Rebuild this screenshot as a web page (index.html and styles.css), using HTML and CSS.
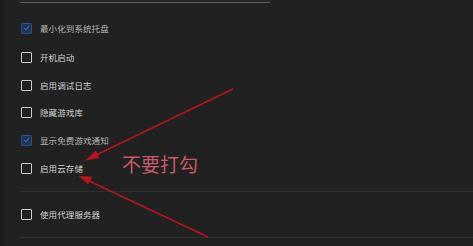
FILE: index.html
```html
<!DOCTYPE html>
<html lang="zh">
<head>
<meta charset="utf-8">
<link rel="stylesheet" href="styles.css">
</head>
<body>
<div class="page">
  <div class="input"></div>
  <div class="list">
    <div class="row checked"><span class="box"><svg viewBox="0 0 10 10" width="10" height="10"><path d="M2.5 5.2 L4.3 7 L7.6 3" fill="none" stroke="#5d7fb0" stroke-width="1"/></svg></span><span class="label">最小化到系统托盘</span></div>
    <div class="row r2"><span class="box"></span><span class="label">开机启动</span></div>
    <div class="row r3"><span class="box"></span><span class="label">启用调试日志</span></div>
    <div class="row"><span class="box"></span><span class="label">隐藏游戏库</span></div>
    <div class="row checked"><span class="box"><svg viewBox="0 0 10 10" width="10" height="10"><path d="M2.5 5.2 L4.3 7 L7.6 3" fill="none" stroke="#5d7fb0" stroke-width="1"/></svg></span><span class="label">显示免费游戏通知</span></div>
    <div class="row"><span class="box"></span><span class="label">启用云存储</span></div>
  </div>
  <div class="section">
    <div class="row proxy"><span class="box"></span><span class="label">使用代理服务器</span></div>
  </div>
  <div class="note">不要打勾</div>
  <svg class="arrows" width="473" height="246" viewBox="0 0 473 246">
    <g stroke="#b3161f" stroke-width="1.6" fill="#c0121c">
      <line x1="233" y1="89" x2="94" y2="156"/>
      <path d="M86 160 L96 151 L99 158 Z" stroke-width="0.5"/>
      <line x1="208" y1="237" x2="87" y2="180"/>
      <path d="M79 176 L92 177 L88 184 Z" stroke-width="0.5"/>
    </g>
  </svg>
</div>
</body>
</html>
```
FILE: styles.css
```css
html, body {
  margin: 0;
  padding: 0;
  background: #212121;
}
.page {
  position: relative;
  width: 473px;
  height: 246px;
  overflow: hidden;
  background: #212121;
  border-left: 4px solid #1c1c1c;
  box-sizing: border-box;
  font-family: "Noto Sans CJK SC", "Noto Sans", sans-serif;
}
.input {
  margin-left: 16px;
  width: 250px;
  height: 2px;
  background: #262626;
  border-bottom: 1px solid #5a5a5a;
}
.list {
  padding-left: 17px;
  padding-top: 11px;
  padding-bottom: 9px;
  border-bottom: 1px solid #2e2e2e;
  margin-left: 16px;
  padding-left: 1px;
}
.row {
  display: flex;
  align-items: center;
  gap: 8px;
  height: 28px;
}
.row.r2 { height: 30px; }
.row.r3 { height: 26px; }
.box {
  width: 9px;
  height: 9px;
  border: 1.5px solid #c8c8c8;
  border-radius: 1px;
  display: flex;
  align-items: center;
  justify-content: center;
  flex: none;
}
.box svg { display: block; }
.checked .box {
  background: #1d3658;
  border-color: #2b4f86;
}
.label {
  font-size: 8.5px;
  color: #d2d2d2;
  letter-spacing: 0.1px;
  line-height: 1;
}
.checked .label {
  color: #b4b4b4;
}
.section {
  margin-left: 16px;
  padding-left: 1px;
  height: 45px;
  display: flex;
  align-items: center;
  border-bottom: 1px solid #2e2e2e;
}
.note {
  position: absolute;
  left: 118px;
  top: 154px;
  font-size: 19px;
  line-height: 1;
  color: #c45a66;
  letter-spacing: 0px;
  font-family: "Noto Sans CJK SC", sans-serif;
}
.arrows {
  position: absolute;
  left: -4px;
  top: 0;
}
```
